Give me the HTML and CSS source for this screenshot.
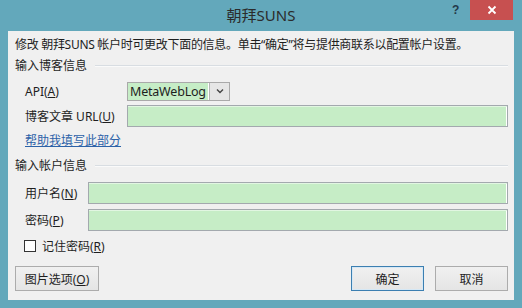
FILE: index.html
```html
<!DOCTYPE html>
<html lang="zh-cn">

<head>
  <meta charset="UTF-8">
  <title>朝拜SUNS</title>
  <link rel="stylesheet" href="styles.css">
</head>

<body>
  <div class="window">
    <div class="titlebar">
      <span class="title">朝拜SUNS</span>
      <span class="help">?</span>
      <span class="close">
        <svg width="10" height="10" viewBox="0 0 10 10">
          <path d="M1.5 1.5 L8.5 8.5 M8.5 1.5 L1.5 8.5" stroke="#fff" stroke-width="1.8" />
        </svg>
      </span>
    </div>
    <div class="client">
      <div class="intro">修改 朝拜SUNS 帐户时可更改下面的信息。单击“确定”将与提供商联系以配置帐户设置。</div>

      <div class="group-title first">输入博客信息<span class="rule"></span></div>
      <div class="group">
        <div class="row api-row">
          <label class="label wide">API(<u>A</u>)</label>
          <div class="select">
            <span class="select-value">MetaWebLog</span>
            <span class="select-btn">
              <svg width="8" height="6" viewBox="0 0 8 6">
                <path d="M1 1.5 L4 4.5 L7 1.5" fill="none" stroke="#444" stroke-width="1.4" />
              </svg>
            </span>
          </div>
        </div>
        <div class="row field-row">
          <label class="label wide">博客文章 URL(<u>U</u>)</label>
          <div class="input"></div>
        </div>
        <a class="help-link" href="#">帮助我填写此部分</a>
      </div>

      <div class="group-title second">输入帐户信息<span class="rule"></span></div>
      <div class="group">
        <div class="row field-row user-row">
          <label class="label narrow">用户名(<u>N</u>)</label>
          <div class="input"></div>
        </div>
        <div class="row field-row">
          <label class="label narrow">密码(<u>P</u>)</label>
          <div class="input"></div>
        </div>
        <div class="check-row">
          <span class="checkbox"></span>
          <span>记住密码(<u>R</u>)</span>
        </div>
      </div>

      <div class="buttons">
        <button class="btn">图片选项(<u>O</u>)</button>
        <span class="spacer"></span>
        <button class="btn btn-default">确定</button>
        <button class="btn">取消</button>
      </div>
    </div>
  </div>
</body>

</html>
```

FILE: styles.css
```css
body {
  margin: 0;
  font-family: "Noto Sans", "Noto Sans CJK SC", sans-serif;
  font-size: 12px;
  color: #1e1e1e;
}

.window {
  width: 522px;
  height: 308px;
  background: #63a8bb;
  display: flex;
  flex-direction: column;
}

.titlebar {
  height: 31px;
  position: relative;
  display: flex;
  justify-content: center;
}

.title {
  font-size: 15px;
  line-height: 30px;
  color: #2b2b2b;
}

.help {
  position: absolute;
  left: 452px;
  top: 3px;
  font-family: "Liberation Sans", sans-serif;
  font-weight: bold;
  font-size: 12px;
  color: #24394a;
}

.close {
  position: absolute;
  left: 470px;
  top: 0;
  width: 43px;
  height: 20px;
  background: #c75050;
  display: flex;
  align-items: center;
  justify-content: center;
}

.client {
  flex: 1;
  margin: 0 8px 8px 8px;
  background: #f0f0f0;
  padding: 6px 6px 0 7px;
}

.intro {
  height: 16px;
  line-height: 16px;
  white-space: nowrap;
  letter-spacing: -0.3px;
}

.group-title {
  display: flex;
  align-items: center;
  height: 16px;
  line-height: 16px;
}

.group-title.first {
  margin-top: 5px;
}

.group-title.second {
  margin-top: 9px;
}

.rule {
  flex: 1;
  margin-left: 8px;
  border-top: 1px solid #d8dde2;
  border-bottom: 1px solid #fafafa;
}

.group {
  padding-left: 10px;
}

.row {
  display: flex;
  align-items: center;
}

.api-row {
  margin-top: 8px;
  height: 18px;
}

.field-row {
  margin-top: 5px;
  height: 22px;
}

.user-row {
  margin-top: 8px;
}

.label {
  white-space: nowrap;
}

.label.wide {
  width: 102px;
}

.label.narrow {
  width: 63px;
}

.select {
  display: flex;
  width: 103px;
  height: 19px;
  border: 1px solid #a9a9a9;
  box-sizing: border-box;
  background: #fff;
}

.select-value {
  flex: 1;
  background: #c6edc6;
  padding: 0 0 0 2px;
  font-size: 12.5px;
  line-height: 17px;
  margin-right: 1px;
  overflow: hidden;
  white-space: nowrap;
  letter-spacing: -0.2px;
}

.select-btn {
  width: 19px;
  background: #e6e6e6;
  border-left: 1px solid #b5b5b5;
  display: flex;
  align-items: center;
  justify-content: center;
}

.input {
  flex: 1;
  height: 22px;
  box-sizing: border-box;
  border: 1px solid #a3a9ae;
  background: #c6edc6;
  box-shadow: inset 0 1px 0 #e2f6e2, inset -1px 0 0 #fff;
}

.help-link {
  display: block;
  margin-top: 6px;
  height: 16px;
  line-height: 16px;
  color: #2c62a8;
  text-decoration: underline;
  width: max-content;
}

.check-row {
  display: flex;
  align-items: center;
  height: 16px;
  margin-top: 7px;
  margin-left: -1px;
}

.checkbox {
  width: 12px;
  height: 12px;
  box-sizing: border-box;
  border: 1px solid #333;
  background: #fff;
  margin-right: 6px;
}

.buttons {
  display: flex;
  margin-top: 12px;
  height: 25px;
}

.spacer {
  flex: 1;
}

.btn {
  font-family: inherit;
  font-size: 12px;
  color: #1e1e1e;
  height: 25px;
  width: 73px;
  margin-left: 11px;
  padding: 0;
  border: 1px solid #acacac;
  background: linear-gradient(#f0f0f0, #e5e5e5);
}

.btn:first-child {
  width: 84px;
  margin-left: 0;
}

.btn-default {
  border-color: #3c7fb1;
  box-shadow: inset 0 0 0 1px #d6e8f5;
}
```
